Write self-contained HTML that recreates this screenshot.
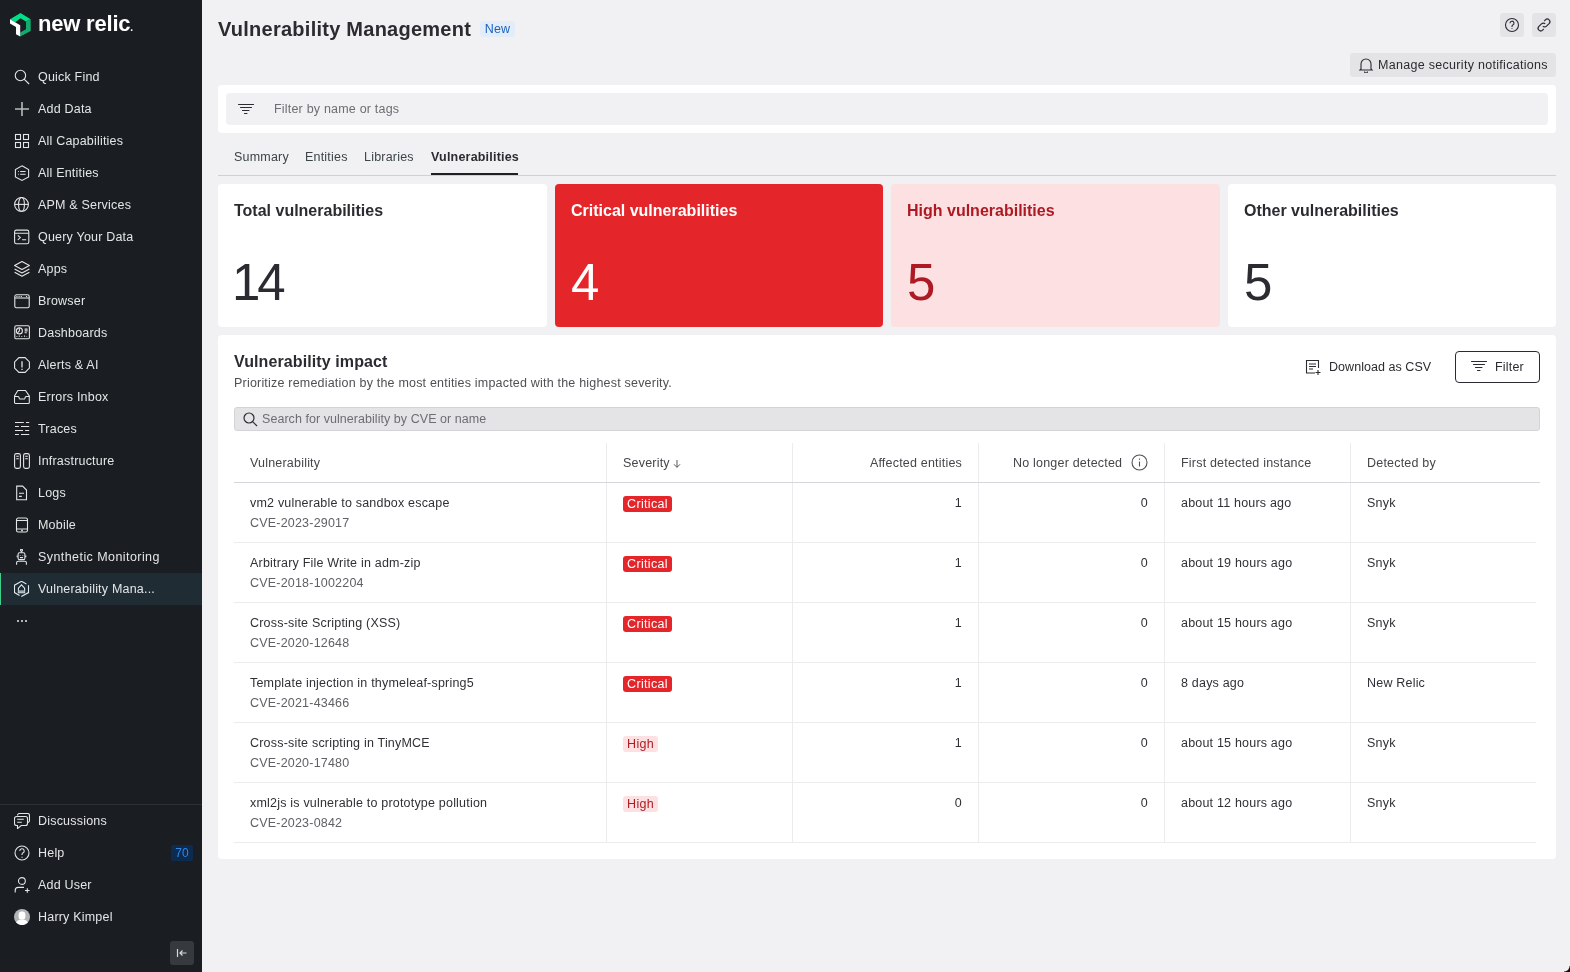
<!DOCTYPE html>
<html><head><meta charset="utf-8">
<style>
*{box-sizing:border-box;margin:0;padding:0}
html,body{width:1570px;height:972px;overflow:hidden}
body{position:relative;background:#f1f1f3;font-family:"Liberation Sans",sans-serif;color:#2b2c31;font-size:12.5px;letter-spacing:0.2px}
.abs{position:absolute}
#side{position:absolute;left:0;top:0;width:202px;height:972px;background:#1a1d21}
.nav{position:absolute;left:0;width:202px;height:32px;line-height:32px;color:#e4e5e6;font-size:12.5px;white-space:nowrap}
.nav .t{position:absolute;left:38px;top:0}
.nav svg{position:absolute;left:14px;top:8px;width:16px;height:16px;fill:none;stroke:#e4e5e6;stroke-width:1.1}
.nav.active{background:#1f2c34}
.nav.active:before{content:"";position:absolute;left:0;top:0;width:1px;height:32px;background:#3bd18a}
#main{position:absolute;left:202px;top:0;right:0;bottom:0}
.card{position:absolute;background:#fff;border-radius:4px}
.stat{position:absolute;top:184px;width:329px;height:143px;border-radius:4px;background:#fff}
.stat .h{position:absolute;left:16px;top:17px;font-size:16px;font-weight:bold;line-height:20px;color:#2b2c31;letter-spacing:0}
.stat .n{position:absolute;left:16px;top:73px;font-size:51px;line-height:52px;color:#2b2c31;letter-spacing:-0.5px}
.th{position:absolute;top:443px;height:39px;line-height:39px;color:#45464b;font-size:12.5px;white-space:nowrap}
.td{position:absolute;font-size:12.5px;color:#303136;white-space:nowrap;line-height:16px}
.sub{color:#606166}
.vline{position:absolute;width:1px;background:#ececef}
.hline{position:absolute;height:1px;background:#ececef}
.badge{position:absolute;height:16px;line-height:16px;border-radius:3px;padding:0 4px;font-size:12.5px;letter-spacing:0.35px}
.crit{background:#e4262a;color:#fff}
.high{background:#fde0e2;color:#b11b22}
</style></head>
<body>
<div id="root" style="position:absolute;left:0;top:0;width:1570px;height:972px;will-change:transform;background:#f1f1f3">
<div id="side">
  <!-- logo -->
  <svg class="abs" style="left:6px;top:10px" width="30" height="30" viewBox="0 0 30 30">
    <polygon points="4,9.3 14.5,2.9 24.7,9.3 20,11.6 14.4,8.2 9.3,12.3" fill="#00e087"/>
    <polygon points="24.7,9.3 24.7,21 14.2,26.6 14.2,22.4 20,19.2 20,11.6" fill="#14aa6e"/>
    <polygon points="4,9.3 14.2,15.2 14.2,26.6 10,24.3 10,17 4,13.6" fill="#fff"/>
  </svg>
  <div class="abs" style="left:38px;top:9px;font-size:22px;font-weight:bold;color:#fff;letter-spacing:-0.2px;line-height:30px">new relic<span style="font-size:10px">.</span></div>

  <div class="nav" style="top:61px"><svg viewBox="0 0 16 16"><circle cx="6.45" cy="6.5" r="5.2"/><path d="M10.1 10.2L15.1 15"/></svg><span class="t">Quick Find</span></div>
  <div class="nav" style="top:93px"><svg viewBox="0 0 16 16" style="stroke:#b8babb;stroke-width:1.6"><path d="M8 1v14M1 8h14"/></svg><span class="t">Add Data</span></div>
  <div class="nav" style="top:125px"><svg viewBox="0 0 16 16"><rect x="1.5" y="1.5" width="5" height="5"/><rect x="9.5" y="1.5" width="5" height="5"/><rect x="1.5" y="9.5" width="5" height="5"/><rect x="9.5" y="9.5" width="5" height="5"/></svg><span class="t">All Capabilities</span></div>
  <div class="nav" style="top:157px"><svg viewBox="0 0 16 16"><path d="M8 0.8L14.6 4.5v7.5L8 15.4 1.4 12V4.5z"/><path d="M6.2 6.5h5.4M6.2 9.2h5.4M4 6.5h0.8M4 9.2h0.8"/></svg><span class="t">All Entities</span></div>
  <div class="nav" style="top:189px"><svg viewBox="0 0 16 16"><circle cx="7.5" cy="7.4" r="6.9"/><ellipse cx="7.5" cy="7.4" rx="2.9" ry="6.9"/><path d="M0.6 7.4h13.8"/></svg><span class="t">APM &amp; Services</span></div>
  <div class="nav" style="top:221px"><svg viewBox="0 0 16 16"><rect x="0.6" y="1.1" width="14.2" height="13.6" rx="1.8"/><path d="M0.6 4.3h14.2M3.8 6.3l2.5 2.3-2.5 2.3M8 10.7h4.2"/></svg><span class="t">Query Your Data</span></div>
  <div class="nav" style="top:253px"><svg viewBox="0 0 16 16" style="stroke-linejoin:round"><path d="M8 0.6l7.4 4-7.4 4-7.4-4z"/><path d="M0.6 7.9L8 11.9l7.4-4M0.6 11.2L8 15.2l7.4-4"/></svg><span class="t">Apps</span></div>
  <div class="nav" style="top:285px"><svg viewBox="0 0 16 16"><rect x="0.8" y="1.8" width="14.4" height="13" rx="1.6"/><path d="M0.8 5h14.4"/><g style="fill:#e4e5e6;stroke:none"><circle cx="2.9" cy="3.4" r=".65"/><circle cx="5.1" cy="3.4" r=".65"/><circle cx="7.3" cy="3.4" r=".65"/><circle cx="12.6" cy="3.4" r=".65"/></g></svg><span class="t">Browser</span></div>
  <div class="nav" style="top:317px"><svg viewBox="0 0 16 16"><rect x="0.8" y="0.8" width="14.6" height="13" rx="1.4"/><circle cx="5.4" cy="5.9" r="3"/><path d="M5.4 3.2v2.7l-1.8 2M10.6 4.1h3M10.6 5.9h3M10.6 7.8h2.2M2.9 11v.8M5.3 10.6v1.2M7.7 11v.8M10.5 10.6v1.2M12.7 11.2v.6"/></svg><span class="t">Dashboards</span></div>
  <div class="nav" style="top:349px"><svg viewBox="0 0 16 16"><path d="M4.9 0.6h6.2l4.3 4.3v6.2l-4.3 4.3H4.9L0.6 11.1V4.9z"/><path d="M8 4.2v6.2M8 11.7v1.3" style="stroke-width:1.3"/></svg><span class="t">Alerts &amp; AI</span></div>
  <div class="nav" style="top:381px"><svg viewBox="0 0 16 16"><path d="M3.9 1.5h7.6l3.8 5.5v6.4a1.1 1.1 0 0 1-1.1 1.1H1.6a1.1 1.1 0 0 1-1.1-1.1V7z"/><path d="M0.5 7.5h3.4c.4 0 .7.2.9.6l.6 1.3c.2.4.5.6.9.6h3.6c.4 0 .7-.2.9-.6l.6-1.3c.2-.4.5-.6.9-.6h3.1"/></svg><span class="t">Errors Inbox</span></div>
  <div class="nav" style="top:413px"><svg viewBox="0 0 16 16" style="stroke-width:1.1"><path d="M1 1.5h8.8M12 1.5h3.2M1 5.5h3.9M7 5.5h8.2M1 9.5h8M11.1 9.5h4.1M1 13.5h3.9M7 13.5h8.2"/></svg><span class="t">Traces</span></div>
  <div class="nav" style="top:445px"><svg viewBox="0 0 16 16"><rect x="0.6" y="0.6" width="5.8" height="14.8" rx="1.8"/><rect x="9.6" y="0.6" width="5.8" height="14.8" rx="1.8"/><path d="M2.2 3.2h2.6M2.2 5.7h2.6M11.2 3.2h2.6M11.2 5.7h2.6"/></svg><span class="t">Infrastructure</span></div>
  <div class="nav" style="top:477px"><svg viewBox="0 0 16 16"><path d="M2.7 1.1h5.9l3.9 3.9v9.8H2.7z"/><path d="M5 8.3h5M5 11.4h2.8"/></svg><span class="t">Logs</span></div>
  <div class="nav" style="top:509px"><svg viewBox="0 0 16 16"><rect x="2.5" y="1" width="11" height="14" rx="1.8"/><path d="M2.5 3.5h11M2.5 12h11"/><circle cx="8" cy="13.5" r=".4"/></svg><span class="t">Mobile</span></div>
  <div class="nav" style="top:541px"><svg viewBox="0 0 16 16"><circle cx="7.5" cy="1.2" r="1"/><path d="M7.5 2.2v1.5"/><rect x="4.1" y="3.8" width="6.8" height="6.8" rx="1.4"/><path d="M3.2 6.4v1.8M11.8 6.4v1.8"/><path d="M6.3 6v.6M8.8 6v.6" style="stroke-width:1.3"/><path d="M5.9 8.6h3.2" style="stroke-width:1.2"/><path d="M2.6 15.8v-2a1.5 1.5 0 0 1 1.5-1.5h6.8a1.5 1.5 0 0 1 1.5 1.5v2"/></svg><span class="t" style="letter-spacing:0.43px">Synthetic Monitoring</span></div>
  <div class="nav active" style="top:573px"><svg viewBox="0 0 16 16" style="stroke:#dfe9ef"><path d="M12.4 2.9L7.5 0.3 0.5 4.2v7.4l5.1 2.9M7.3 15.5l7.2-3.9V4.2"/><path d="M4.4 11.6V7.2l3.1-3.4 3.1 3.4v4.4z"/><rect x="4.4" y="9.3" width="6.2" height="2.3" fill="#9aa9b2" stroke="none"/></svg><span class="t">Vulnerability Mana...</span></div>
  <div class="abs" style="left:17px;top:620px;width:2px;height:2px;background:#b4b5b7"></div><div class="abs" style="left:21px;top:620px;width:2px;height:2px;background:#b4b5b7"></div><div class="abs" style="left:25px;top:620px;width:2px;height:2px;background:#b4b5b7"></div>

  <div class="abs" style="left:0;top:804px;width:202px;height:1px;background:#2c3035"></div>
  <div class="nav" style="top:805px"><svg viewBox="0 0 16 16"><path d="M3.5 2.6V2.5a2 2 0 0 1 2-2h8a2 2 0 0 1 2 2v5a2 2 0 0 1-1.6 1.95"/><path d="M2.5 3.5h9a2 2 0 0 1 2 2v5a2 2 0 0 1-2 2H7.2L3.5 15.6v-3.1h-1a2 2 0 0 1-2-2v-5a2 2 0 0 1 2-2z"/><path d="M3.2 6.3h6.6M3.2 9.3h4.6"/></svg><span class="t" style="top:0">Discussions</span></div>
  <div class="nav" style="top:837px"><svg viewBox="0 0 16 16"><circle cx="8" cy="8" r="7"/><path d="M5.8 6a2.2 2.2 0 1 1 3 2c-.6.3-.8.7-.8 1.4v.6M8 11.8v.9"/></svg><span class="t" style="top:0">Help</span>
    <span class="abs" style="left:171px;top:8px;width:22px;height:16px;line-height:16px;background:#0c2b4f;color:#3386e6;font-size:12px;text-align:center;border-radius:2px">70</span></div>
  <div class="nav" style="top:869px"><svg viewBox="0 0 16 16"><circle cx="7.9" cy="4" r="3.4"/><path d="M1.2 15.6v-2.2a3 3 0 0 1 3-3H10M13.3 11.2v4.6M11 13.5h4.6"/></svg><span class="t" style="top:0">Add User</span></div>
  <div class="nav" style="top:901px"><svg viewBox="0 0 16 16" style="stroke:none"><circle cx="8" cy="8" r="8" fill="#b3b4b7"/><rect x="4.6" y="2.6" width="6.8" height="8" rx="3.2" fill="#fff"/><path d="M2.2 13.6C3 11.6 5 10.6 8 10.6s5 1 5.8 3A8 8 0 0 1 2.2 13.6z" fill="#fff"/></svg><span class="t" style="top:0">Harry Kimpel</span></div>

  <div class="abs" style="left:170px;top:941px;width:24px;height:24px;background:#363a3f;border-radius:3px">
    <svg class="abs" style="left:6px;top:6px" width="12" height="12" viewBox="0 0 12 12" fill="none" stroke="#d8d8d8" stroke-width="1.2"><path d="M1.5 2v8M10.5 6H4M6.5 3.5L4 6l2.5 2.5"/></svg>
  </div>
</div>

<!-- header -->
<div class="abs" style="left:218px;top:16px;font-size:20px;font-weight:bold;line-height:26px;color:#2b2c31;letter-spacing:0.25px">Vulnerability Management</div>
<div class="abs" style="left:480px;top:21px;width:35px;height:16px;line-height:16px;background:#e3edf9;color:#1c62bd;font-size:12.5px;text-align:center;border-radius:3px">New</div>

<div class="abs" style="left:1500px;top:13px;width:24px;height:24px;background:#e4e4e7;border-radius:3px">
  <svg class="abs" style="left:4px;top:4px" width="16" height="16" viewBox="0 0 16 16" fill="none" stroke="#2b2c31" stroke-width="1.1"><circle cx="8" cy="8" r="6.5"/><path d="M6 6.2a2 2 0 1 1 2.8 1.8c-.5.3-.8.6-.8 1.3v.6M8 11.2v.9"/></svg>
</div>
<div class="abs" style="left:1532px;top:13px;width:24px;height:24px;background:#e4e4e7;border-radius:3px">
  <svg class="abs" style="left:4px;top:4px" width="16" height="16" viewBox="0 0 16 16" fill="none" stroke="#2b2c31" stroke-width="1.2"><path d="M6.8 9.2a2.6 2.6 0 0 0 3.7 0l2.6-2.6a2.6 2.6 0 0 0-3.7-3.7L8.2 4.1"/><path d="M9.2 6.8a2.6 2.6 0 0 0-3.7 0L2.9 9.4a2.6 2.6 0 0 0 3.7 3.7l1.2-1.2"/></svg>
</div>
<div class="abs" style="left:1350px;top:53px;width:206px;height:24px;background:#e4e4e7;border-radius:3px">
  <svg class="abs" style="left:8px;top:4px" width="16" height="16" viewBox="0 0 16 16" fill="none" stroke="#2b2c31" stroke-width="1.1"><path d="M3 12V7a5 5 0 0 1 10 0v5l1 1H2z"/><path d="M6.5 14.5a1.5 1.5 0 0 0 3 0"/></svg>
  <span class="abs" style="left:28px;top:0;line-height:24px;font-size:12.5px;color:#2b2c31;letter-spacing:0.3px">Manage security notifications</span>
</div>

<!-- filter bar -->
<div class="card" style="left:218px;top:85px;width:1338px;height:48px">
  <div class="abs" style="left:8px;top:8px;width:1322px;height:32px;background:#f1f1f3;border-radius:4px">
    <svg class="abs" style="left:12px;top:8px" width="16" height="16" viewBox="0 0 16 16" fill="none" stroke="#2b2c31" stroke-width="1.1" stroke-linecap="round"><path d="M0.5 3.5h15M2.5 6.5h11M4.5 9.5h6.5M6.5 12.5h2.5"/></svg>
    <span class="abs" style="left:48px;top:0;line-height:32px;color:#6d6e73">Filter by name or tags</span>
  </div>
</div>

<!-- tabs -->
<div class="abs" style="left:218px;top:175px;width:1338px;height:1px;background:#cfd0d4"></div>
<div class="abs" style="left:234px;top:148px;line-height:18px;color:#3b4448">Summary</div>
<div class="abs" style="left:305px;top:148px;line-height:18px;color:#3b4448">Entities</div>
<div class="abs" style="left:364px;top:148px;line-height:18px;color:#3b4448">Libraries</div>
<div class="abs" style="left:431px;top:148px;line-height:18px;color:#2b2c31;font-weight:bold">Vulnerabilities</div>
<div class="abs" style="left:431px;top:173px;width:87px;height:2px;background:#1f2024"></div>

<!-- stats -->
<div class="stat" style="left:218px"><div class="h">Total vulnerabilities</div><div class="n" style="left:14px;letter-spacing:-3px">14</div></div>
<div class="stat" style="left:555px;width:328px;background:#e4262a"><div class="h" style="color:#fff">Critical vulnerabilities</div><div class="n" style="color:#fff">4</div></div>
<div class="stat" style="left:891px;background:#fde0e2"><div class="h" style="color:#ae1a23">High vulnerabilities</div><div class="n" style="color:#ae1a23">5</div></div>
<div class="stat" style="left:1228px;width:328px"><div class="h">Other vulnerabilities</div><div class="n">5</div></div>

<!-- impact card -->
<div class="card" style="left:218px;top:335px;width:1338px;height:524px"></div>
<div class="abs" style="left:234px;top:352px;font-size:16px;font-weight:bold;line-height:20px;color:#2b2c31;letter-spacing:0.1px">Vulnerability impact</div>
<div class="abs" style="left:234px;top:375px;line-height:16px;color:#4f5055">Prioritize remediation by the most entities impacted with the highest severity.</div>

<div class="abs" style="left:1305px;top:359px;width:17px;height:17px">
  <svg width="17" height="17" viewBox="0 0 17 17" fill="none" stroke="#2b2c31" stroke-width="1.1"><path d="M10 14H1.5V1.5h12V9"/><path d="M4 5h7M4 7.5h7M4 10h4M13 11v5M10.5 13.5h5"/></svg>
</div>
<div class="abs" style="left:1329px;top:359px;line-height:16px;color:#2b2c31;letter-spacing:0.05px">Download as CSV</div>
<div class="abs" style="left:1455px;top:351px;width:85px;height:32px;border:1px solid #2b2c31;border-radius:4px">
  <svg class="abs" style="left:15px;top:6px" width="16" height="16" viewBox="0 0 16 16" fill="none" stroke="#2b2c31" stroke-width="1.1" stroke-linecap="round"><path d="M0.5 3.5h15M2.5 6.5h11M4.5 9.5h6.5M6.5 12.5h2.5"/></svg>
  <span class="abs" style="left:39px;top:0;line-height:30px;color:#2b2c31">Filter</span>
</div>

<div class="abs" style="left:234px;top:407px;width:1306px;height:24px;background:#e4e4e7;border:1px solid #d3d4d8;border-radius:3px">
  <svg class="abs" style="left:8px;top:4px" width="15" height="15" viewBox="0 0 15 15" fill="none" stroke="#2b2c31" stroke-width="1.2"><circle cx="6" cy="6" r="5"/><path d="M9.6 9.6L14 14"/></svg>
  <span class="abs" style="left:27px;top:0;line-height:22px;color:#6d6e73;font-size:12.5px;letter-spacing:0.05px">Search for vulnerability by CVE or name</span>
</div>

<div class="abs" style="left:1564px;top:966px;width:6px;height:6px;background:radial-gradient(circle at 0 0,rgba(0,0,0,0) 5px,#0e1012 6px)"></div>
<!-- table -->
<div id="tbl">
<div class="vline" style="left:606px;top:443px;height:400px"></div>
<div class="vline" style="left:792px;top:443px;height:400px"></div>
<div class="vline" style="left:978px;top:443px;height:400px"></div>
<div class="vline" style="left:1164px;top:443px;height:400px"></div>
<div class="vline" style="left:1350px;top:443px;height:400px"></div>
<div class="hline" style="left:234px;top:482px;width:1306px;background:#d5d6da"></div>
<div class="th" style="left:250px;top:444px">Vulnerability</div>
<div class="th" style="left:623px;top:444px">Severity <svg width="8" height="8" viewBox="0 0 8 8" style="vertical-align:-0.5px" fill="none" stroke="#555a5f" stroke-width="1"><path d="M4 0v7.3M1 4.3l3 3 3-3"/></svg></div>
<div class="th" style="right:608px;top:444px">Affected entities</div>
<div class="th" style="left:1013px;top:444px">No longer detected</div>
<svg class="abs" style="left:1131px;top:454px" width="17" height="17" viewBox="0 0 17 17" fill="none" stroke="#505156" stroke-width="1.1"><circle cx="8.5" cy="8.5" r="7.5"/><path d="M8.5 7.5v5M8.5 4.6v1.2"/></svg>
<div class="th" style="left:1181px;top:444px">First detected instance</div>
<div class="th" style="left:1367px;top:444px">Detected by</div>
<div class="hline" style="left:234px;top:542px;width:1302px"></div>
<div class="td" style="left:250px;top:495px">vm2 vulnerable to sandbox escape</div>
<div class="td sub" style="left:250px;top:515px">CVE-2023-29017</div>
<div class="badge crit" style="left:623px;top:496px">Critical</div>
<div class="td" style="right:608px;top:495px">1</div>
<div class="td" style="right:422px;top:495px">0</div>
<div class="td" style="left:1181px;top:495px">about 11 hours ago</div>
<div class="td" style="left:1367px;top:495px">Snyk</div>
<div class="hline" style="left:234px;top:602px;width:1302px"></div>
<div class="td" style="left:250px;top:555px">Arbitrary File Write in adm-zip</div>
<div class="td sub" style="left:250px;top:575px">CVE-2018-1002204</div>
<div class="badge crit" style="left:623px;top:556px">Critical</div>
<div class="td" style="right:608px;top:555px">1</div>
<div class="td" style="right:422px;top:555px">0</div>
<div class="td" style="left:1181px;top:555px">about 19 hours ago</div>
<div class="td" style="left:1367px;top:555px">Snyk</div>
<div class="hline" style="left:234px;top:662px;width:1302px"></div>
<div class="td" style="left:250px;top:615px">Cross-site Scripting (XSS)</div>
<div class="td sub" style="left:250px;top:635px">CVE-2020-12648</div>
<div class="badge crit" style="left:623px;top:616px">Critical</div>
<div class="td" style="right:608px;top:615px">1</div>
<div class="td" style="right:422px;top:615px">0</div>
<div class="td" style="left:1181px;top:615px">about 15 hours ago</div>
<div class="td" style="left:1367px;top:615px">Snyk</div>
<div class="hline" style="left:234px;top:722px;width:1302px"></div>
<div class="td" style="left:250px;top:675px">Template injection in thymeleaf-spring5</div>
<div class="td sub" style="left:250px;top:695px">CVE-2021-43466</div>
<div class="badge crit" style="left:623px;top:676px">Critical</div>
<div class="td" style="right:608px;top:675px">1</div>
<div class="td" style="right:422px;top:675px">0</div>
<div class="td" style="left:1181px;top:675px">8 days ago</div>
<div class="td" style="left:1367px;top:675px">New Relic</div>
<div class="hline" style="left:234px;top:782px;width:1302px"></div>
<div class="td" style="left:250px;top:735px">Cross-site scripting in TinyMCE</div>
<div class="td sub" style="left:250px;top:755px">CVE-2020-17480</div>
<div class="badge high" style="left:623px;top:736px">High</div>
<div class="td" style="right:608px;top:735px">1</div>
<div class="td" style="right:422px;top:735px">0</div>
<div class="td" style="left:1181px;top:735px">about 15 hours ago</div>
<div class="td" style="left:1367px;top:735px">Snyk</div>
<div class="hline" style="left:234px;top:842px;width:1302px"></div>
<div class="td" style="left:250px;top:795px">xml2js is vulnerable to prototype pollution</div>
<div class="td sub" style="left:250px;top:815px">CVE-2023-0842</div>
<div class="badge high" style="left:623px;top:796px">High</div>
<div class="td" style="right:608px;top:795px">0</div>
<div class="td" style="right:422px;top:795px">0</div>
<div class="td" style="left:1181px;top:795px">about 12 hours ago</div>
<div class="td" style="left:1367px;top:795px">Snyk</div>
</div><!--/tbl-->
</div>
</body></html>
